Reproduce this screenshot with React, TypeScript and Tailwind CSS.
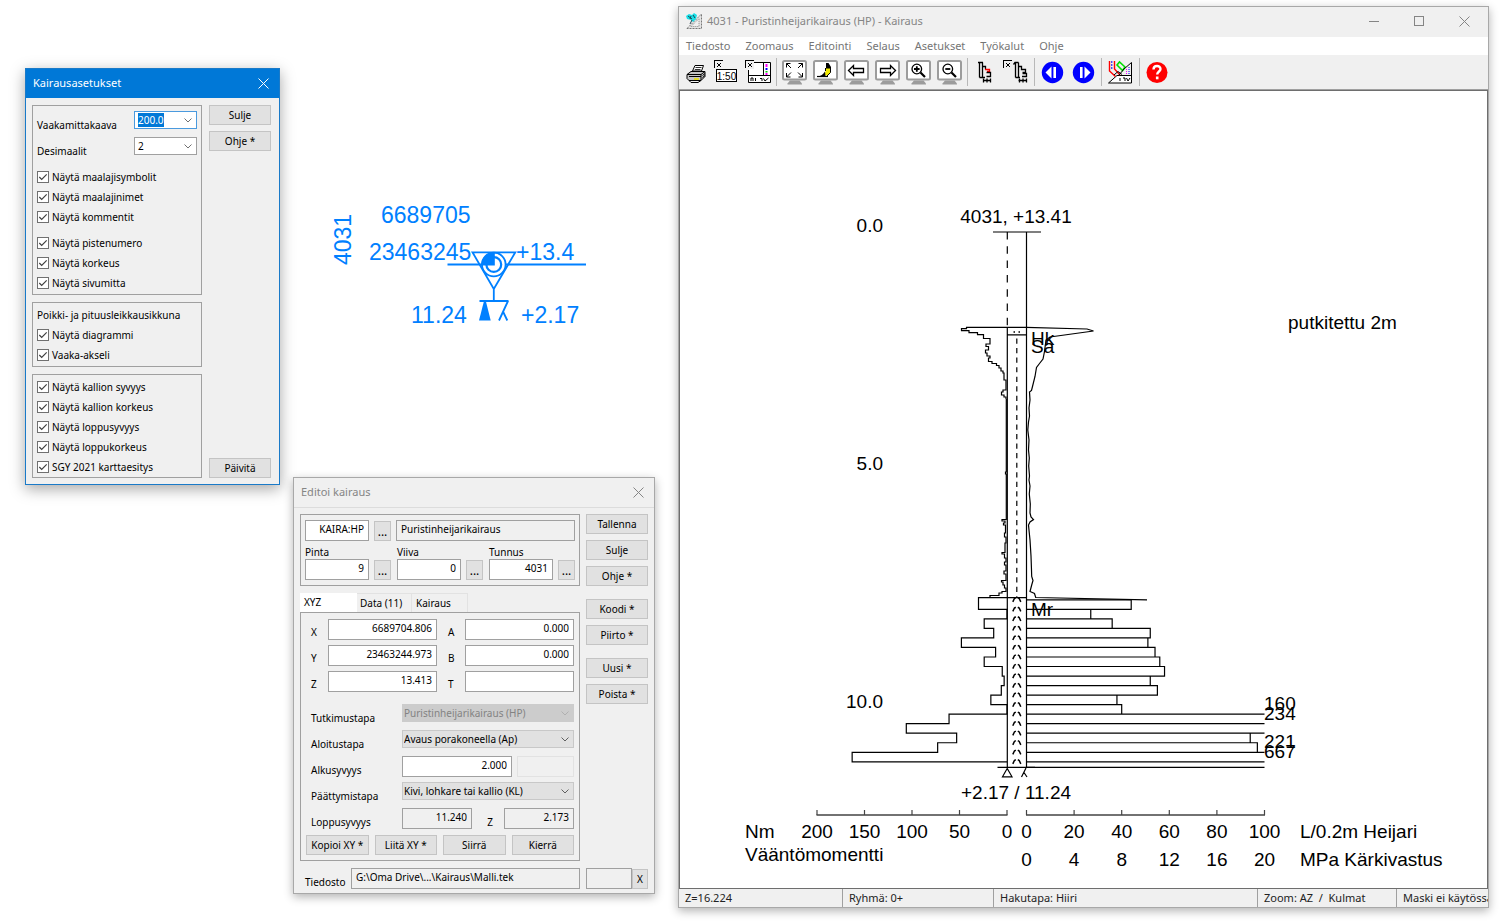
import React, { useEffect, useRef } from 'react';
import { clsx } from 'clsx';

/* ---------- shared controls ---------- */

const UI_FONT =
    "font-['Noto_Sans','Open_Sans',sans-serif] text-[10px] text-black";

function CloseIcon() {
    return (
        <svg width="11" height="11" viewBox="0 0 11 11" aria-hidden="true">
            <path
                d="M.5 .5l10 10M10.5 .5l-10 10"
                stroke="currentColor"
                fill="none"
            />
        </svg>
    );
}

function PushButton({
    children,
    className,
}: {
    children: React.ReactNode;
    className?: string;
}) {
    return (
        <button
            type="button"
            className={clsx(
                'flex h-5 items-center justify-center border border-[#c4c4c4] bg-[#e1e1e1] leading-4 whitespace-nowrap',
                className,
            )}
        >
            {children}
        </button>
    );
}

function Chevron({ className }: { className?: string }) {
    return (
        <svg
            width="8"
            height="5"
            viewBox="0 0 8 5"
            aria-hidden="true"
            className={clsx(
                'pointer-events-none mr-[5px] self-center justify-self-end [grid-area:1/1]',
                className,
            )}
        >
            <path d="M.5 .5L4 4L7.5 .5" stroke="currentColor" fill="none" />
        </svg>
    );
}

function CheckRow({ label }: { label: string }) {
    return (
        <label className="flex h-5 items-center gap-[3px] leading-4">
            <span className="grid">
                <input
                    type="checkbox"
                    defaultChecked
                    className="peer size-3 appearance-none border border-[#707070] bg-white [grid-area:1/1]"
                />
                <svg
                    viewBox="0 0 12 12"
                    aria-hidden="true"
                    className="pointer-events-none invisible size-3 [grid-area:1/1] peer-checked:visible"
                >
                    <path
                        d="M2.3 6l2.4 2.4l5-5"
                        stroke="#404040"
                        strokeWidth="1.2"
                        fill="none"
                    />
                </svg>
            </span>
            {label}
        </label>
    );
}

function Field({
    label,
    id,
    value,
    className,
    readOnly,
}: {
    label: string;
    id?: string;
    value: string;
    className?: string;
    readOnly?: boolean;
}) {
    return (
        <input
            id={id}
            aria-label={label}
            defaultValue={value}
            readOnly={readOnly}
            className={clsx(
                'h-[21px] min-w-0 border border-[#a0a0a0] px-1 pb-1 leading-4 outline-none',
                readOnly ? 'bg-[#f0f0f0]' : 'bg-white',
                className,
            )}
        />
    );
}

function Dropdown({
    id,
    label,
    value,
    disabled,
}: {
    id: string;
    label: string;
    value: string;
    disabled?: boolean;
}) {
    return (
        <div className="flex h-[26px] items-start">
            <label
                htmlFor={id}
                className="w-24 shrink-0 pl-[5px] leading-[28px]"
            >
                {label}
            </label>
            <span className="grid min-w-0 flex-1">
                <select
                    id={id}
                    disabled={disabled}
                    className={clsx(
                        'h-[18px] w-full appearance-none border px-px leading-4 outline-none [grid-area:1/1]',
                        disabled
                            ? 'border-[#cccccc] bg-[#cccccc] text-[#838383] opacity-100'
                            : 'border-[#c8c8c8] bg-[#e1e1e1]',
                    )}
                >
                    <option>{value}</option>
                </select>
                <Chevron
                    className={disabled ? 'text-[#b0b0b0]' : 'text-[#606060]'}
                />
            </span>
        </div>
    );
}

/* ---------- Kairausasetukset ---------- */

function SettingsWindow() {
    const scaleRef = useRef<HTMLInputElement>(null);

    useEffect(() => {
        scaleRef.current?.focus();
        scaleRef.current?.select();
    }, []);

    return (
        <section
            className={clsx(
                'absolute top-[68px] left-[25px] w-[255px] border border-[#1a7ac8] bg-[#f0f0f0] shadow-[0_4px_14px_rgba(0,0,0,0.35)]',
                UI_FONT,
            )}
        >
            <header className="flex h-[29px] items-center justify-between bg-[#0078d7] pr-[10px] pl-[7px] text-[11px] text-white">
                <h2>Kairausasetukset</h2>
                <button type="button" aria-label="Sulje ikkuna">
                    <CloseIcon />
                </button>
            </header>
            <div className="flex gap-[7px] pt-[7px] pr-2 pb-[6px] pl-[6px]">
                <div className="flex flex-1 flex-col gap-[7px]">
                    <div className="border border-[#a0a0a0] px-1 pt-[5px] pb-px">
                        <div className="flex h-[26px] items-start justify-between">
                            <label htmlFor="scale" className="leading-[28px]">
                                Vaakamittakaava
                            </label>
                            <span className="grid w-[63px]">
                                <input
                                    id="scale"
                                    ref={scaleRef}
                                    defaultValue="200.0"
                                    className="h-[18px] w-full border border-[#4a9ade] bg-white px-[3px] leading-4 outline-none [grid-area:1/1] selection:bg-[#0078d7] selection:text-white"
                                />
                                <Chevron className="text-[#707070]" />
                            </span>
                        </div>
                        <div className="flex h-[26px] items-start justify-between">
                            <label
                                htmlFor="decimals"
                                className="leading-[28px]"
                            >
                                Desimaalit
                            </label>
                            <span className="grid w-[63px]">
                                <select
                                    id="decimals"
                                    className="h-[18px] w-full appearance-none border border-[#a0a0a0] bg-white px-[3px] leading-4 [grid-area:1/1]"
                                >
                                    <option>2</option>
                                </select>
                                <Chevron className="text-[#707070]" />
                            </span>
                        </div>
                        <div className="mt-1">
                            <CheckRow label="Näytä maalajisymbolit" />
                            <CheckRow label="Näytä maalajinimet" />
                            <CheckRow label="Näytä kommentit" />
                        </div>
                        <div className="mt-[6px]">
                            <CheckRow label="Näytä pistenumero" />
                            <CheckRow label="Näytä korkeus" />
                            <CheckRow label="Näytä sivumitta" />
                        </div>
                    </div>
                    <div className="border border-[#a0a0a0] px-1 pt-[2px] pb-px">
                        <p className="leading-5">
                            Poikki- ja pituusleikkausikkuna
                        </p>
                        <CheckRow label="Näytä diagrammi" />
                        <CheckRow label="Vaaka-akseli" />
                    </div>
                    <div className="border border-[#a0a0a0] px-1 pt-[2px]">
                        <CheckRow label="Näytä kallion syvyys" />
                        <CheckRow label="Näytä kallion korkeus" />
                        <CheckRow label="Näytä loppusyvyys" />
                        <CheckRow label="Näytä loppukorkeus" />
                        <CheckRow label="SGY 2021 karttaesitys" />
                    </div>
                </div>
                <div className="flex w-[62px] flex-col gap-[6px]">
                    <PushButton>Sulje</PushButton>
                    <PushButton>Ohje *</PushButton>
                    <PushButton className="mt-auto">Päivitä</PushButton>
                </div>
            </div>
        </section>
    );
}

/* ---------- map symbol ---------- */

function MapSymbol() {
    return (
        <svg
            viewBox="330 200 260 130"
            className="absolute top-[200px] left-[330px] w-[260px] font-['Liberation_Sans',Arial,sans-serif] text-[23px]"
            fill="#0080ff"
            stroke="none"
        >
            <text x="381" y="223">
                6689705
            </text>
            <text x="369" y="260">
                23463245
            </text>
            <text x="516" y="260">
                +13.4
            </text>
            <text x="411" y="323">
                11.24
            </text>
            <text x="521" y="323">
                +2.17
            </text>
            <text transform="translate(351 265) rotate(-90)">4031</text>
            <g fill="none" stroke="#0080ff" strokeWidth="1.8">
                <path d="M472.5 252.3H515.3L493.8 289ZM493.8 289V301M479.5 301H508.5" />
                <path d="M447.5 264.5H482M505.5 264.5H586" />
                <circle cx="493.8" cy="264.5" r="11.8" />
                <circle cx="493.8" cy="264.5" r="7.4" strokeWidth="2.2" />
                <path d="M508 301L499 320.5M503 311.5L507.3 320.5" />
            </g>
            <path d="M494.8 265.5V252.5A12.5 12.5 0 0 0 481.3 265.5Z" />
            <path d="M484 301H485.8L490.7 320.5H479Z" />
        </svg>
    );
}

/* ---------- Editoi kairaus ---------- */

function MoreButton({ label }: { label: string }) {
    return (
        <button
            type="button"
            aria-label={label}
            className="mt-px h-5 w-[17px] shrink-0 border border-[#c4c4c4] bg-[#e1e1e1] text-[12px] leading-5"
        >
            ...
        </button>
    );
}

const POINT_FIELDS = [
    { label: 'Pinta', value: '9' },
    { label: 'Viiva', value: '0' },
    { label: 'Tunnus', value: '4031' },
];

const COORD_ROWS = [
    ['X', '6689704.806', 'A', '0.000'],
    ['Y', '23463244.973', 'B', '0.000'],
    ['Z', '13.413', 'T', ''],
];

function EditWindow() {
    return (
        <section
            className={clsx(
                'absolute top-[477px] left-[293px] w-[362px] border border-[#a8a8a8] bg-[#f0f0f0] shadow-[0_3px_9px_rgba(0,0,0,0.3)]',
                UI_FONT,
            )}
        >
            <header className="flex h-[30px] items-center justify-between border-b border-[#dcdcdc] pr-[10px] pl-[7px] text-[11px] text-[#858585]">
                <h2>Editoi kairaus</h2>
                <button type="button" aria-label="Sulje ikkuna">
                    <CloseIcon />
                </button>
            </header>
            <div className="flex gap-[6px] px-[6px] pt-[6px]">
                <div className="min-w-0 flex-1">
                    <div className="border border-[#a0a0a0] px-1 pt-[5px] pb-[5px]">
                        <div className="flex gap-[5px]">
                            <Field
                                label="Koodi"
                                value="KAIRA:HP"
                                className="w-16 text-right"
                            />
                            <MoreButton label="Valitse koodi" />
                            <Field
                                label="Koodin nimi"
                                value="Puristinheijarikairaus"
                                readOnly
                                className="flex-1"
                            />
                        </div>
                        <div className="mt-1 flex justify-between">
                            {POINT_FIELDS.map((field) => (
                                <div key={field.label}>
                                    <label
                                        htmlFor={field.label}
                                        className="block leading-[14px]"
                                    >
                                        {field.label}
                                    </label>
                                    <div className="flex gap-[5px]">
                                        <Field
                                            id={field.label}
                                            label={field.label}
                                            value={field.value}
                                            className="w-16 text-right"
                                        />
                                        <MoreButton
                                            label={`Valitse ${field.label}`}
                                        />
                                    </div>
                                </div>
                            ))}
                        </div>
                    </div>

                    <div role="tablist" className="mt-[7px] flex h-[19px]">
                        <button
                            type="button"
                            role="tab"
                            aria-selected="true"
                            className="w-[57px] bg-white pl-1 text-left leading-[17px]"
                        >
                            XYZ
                        </button>
                        <button
                            type="button"
                            role="tab"
                            aria-selected="false"
                            className="w-[55px] border-t border-r border-[#e2e2e2] pl-[3px] text-left leading-[18px]"
                        >
                            Data (11)
                        </button>
                        <button
                            type="button"
                            role="tab"
                            aria-selected="false"
                            className="w-14 border-t border-r border-[#e2e2e2] pl-1 text-left leading-[18px]"
                        >
                            Kairaus
                        </button>
                    </div>
                    <div className="border border-[#a0a0a0] px-[5px] pt-[6px] pb-[5px]">
                        {COORD_ROWS.map(([a, aValue, b, bValue]) => (
                            <div key={a} className="flex h-[26px] items-start">
                                <label
                                    htmlFor={a}
                                    className="w-[22px] shrink-0 pl-[5px] leading-[26px]"
                                >
                                    {a}
                                </label>
                                <Field
                                    id={a}
                                    label={a}
                                    value={aValue}
                                    className="flex-1 text-right"
                                />
                                <label
                                    htmlFor={b}
                                    className="w-7 shrink-0 pl-[11px] leading-[26px]"
                                >
                                    {b}
                                </label>
                                <Field
                                    id={b}
                                    label={b}
                                    value={bValue}
                                    className="flex-1 text-right"
                                />
                            </div>
                        ))}
                        <div className="mt-[7px]">
                            <Dropdown
                                id="tutkimustapa"
                                label="Tutkimustapa"
                                value="Puristinheijarikairaus (HP)"
                                disabled
                            />
                            <Dropdown
                                id="aloitustapa"
                                label="Aloitustapa"
                                value="Avaus porakoneella (Ap)"
                            />
                            <div className="flex h-[26px] items-start">
                                <label
                                    htmlFor="alkusyvyys"
                                    className="w-24 shrink-0 pl-[5px] leading-[28px]"
                                >
                                    Alkusyvyys
                                </label>
                                <Field
                                    id="alkusyvyys"
                                    label="Alkusyvyys"
                                    value="2.000"
                                    className="w-[110px] text-right"
                                />
                                <input
                                    aria-label="Alkusyvyyden lisätieto"
                                    disabled
                                    className="ml-[5px] h-[21px] min-w-0 flex-1 border border-[#e2e2e2]"
                                />
                            </div>
                            <Dropdown
                                id="paattymistapa"
                                label="Päättymistapa"
                                value="Kivi, lohkare tai kallio (KL)"
                            />
                            <div className="flex h-[26px] items-start">
                                <label
                                    htmlFor="loppusyvyys"
                                    className="w-24 shrink-0 pl-[5px] leading-[28px]"
                                >
                                    Loppusyvyys
                                </label>
                                <Field
                                    id="loppusyvyys"
                                    label="Loppusyvyys"
                                    value="11.240"
                                    readOnly
                                    className="w-[70px] text-right"
                                />
                                <label
                                    htmlFor="loppu-z"
                                    className="flex-1 pl-1 text-center leading-[28px]"
                                >
                                    Z
                                </label>
                                <Field
                                    id="loppu-z"
                                    label="Z"
                                    value="2.173"
                                    readOnly
                                    className="w-[70px] text-right"
                                />
                            </div>
                        </div>
                        <div className="mt-px grid grid-cols-4 gap-[6px]">
                            <PushButton>Kopioi XY *</PushButton>
                            <PushButton>Liitä XY *</PushButton>
                            <PushButton>Siirrä</PushButton>
                            <PushButton>Kierrä</PushButton>
                        </div>
                    </div>
                </div>
                <div className="flex w-[62px] shrink-0 flex-col gap-[6px]">
                    <PushButton>Tallenna</PushButton>
                    <PushButton>Sulje</PushButton>
                    <PushButton>Ohje *</PushButton>
                    <PushButton className="mt-[7px]">Koodi *</PushButton>
                    <PushButton>Piirto *</PushButton>
                    <PushButton className="mt-[7px]">Uusi *</PushButton>
                    <PushButton>Poista *</PushButton>
                </div>
            </div>
            <div className="mt-[7px] mb-1 flex h-[21px] items-start px-[6px]">
                <label
                    htmlFor="file"
                    className="w-[51px] shrink-0 pl-[5px] leading-[28px]"
                >
                    Tiedosto
                </label>
                <Field
                    id="file"
                    label="Tiedosto"
                    value="G:\Oma Drive\...\Kairaus\Malli.tek"
                    readOnly
                    className="flex-1"
                />
                <Field
                    label="Suodatin"
                    value=""
                    readOnly
                    className="ml-[6px] w-[46px]"
                />
                <PushButton className="mt-px w-4">X</PushButton>
            </div>
        </section>
    );
}

/* ---------- toolbar icons, 30 x 28 each ---------- */

function Icon({ children }: { children: React.ReactNode }) {
    return (
        <svg
            width="30"
            height="28"
            viewBox="0 0 30 28"
            fill="none"
            stroke="#000"
            aria-hidden="true"
            className="mx-auto"
        >
            {children}
        </svg>
    );
}

function Monitor({ children }: { children: React.ReactNode }) {
    return (
        <Icon>
            <rect
                x="4"
                y="3"
                width="23"
                height="18.5"
                rx="1.5"
                fill="#fff"
                stroke="#9c9c9c"
                strokeWidth="2"
            />
            <path d="M11 22.5H20.5L23 25.5V26.5H8.5V25.5Z" fill="#9c9c9c" stroke="none" />
            {children}
        </Icon>
    );
}

function CornerMark() {
    return (
        <>
            <path d="M2 2.5H11M2.5 2V10" />
            <path d="M5 5l4 4M9 5l-4 4" />
        </>
    );
}

function PrinterIcon() {
    return (
        <Icon>
            <path d="M11.5 13L14 7.5H22.5L20.5 13Z" fill="#fff" />
            <path d="M14.5 9.5H20.5M13.8 11.5H19.5" stroke="#333" />
            <path d="M6 16.5L10 13.5H24V18.5L20 22.5H8L6 20.5Z" fill="#c4c4c4" />
            <path d="M6 16.5H20L24 13.5M20 16.5V22.5M21.5 17.5L24 15.5M21.5 19.5L24 17.5" />
            <path d="M8 18.5H20M8 22.5L10 24.5H17L20 22.5" />
            <path d="M13 21H18" stroke="#e8e000" strokeWidth="1.6" />
        </Icon>
    );
}

function ScaleIcon() {
    return (
        <Icon>
            <CornerMark />
            <rect x="4.5" y="11.5" width="20" height="12" fill="#fff" />
            <text
                x="14.5"
                y="21.5"
                textAnchor="middle"
                fill="#000"
                stroke="none"
                className="font-['Liberation_Sans',Arial,sans-serif] text-[10px]"
            >
                1:50
            </text>
        </Icon>
    );
}

function SheetIcon() {
    return (
        <Icon>
            <path d="M5.5 4.5H27V24H5.5Z" fill="#fff" stroke="none" />
            <path d="M1 1H11V11H1Z" fill="#f0f0f0" stroke="none" />
            <path d="M11 4.5H27.5V24.5H5.5V12M20.5 5V18M5.5 17.5H27" />
            <path d="M23.5 6V9" stroke="#f0f" strokeWidth="2" />
            <path d="M23.5 10V12" stroke="#00f" strokeWidth="2" />
            <path d="M23.5 13V14.5" stroke="#0c0" strokeWidth="2" />
            <path d="M23.5 15V17" stroke="#f0f" strokeWidth="2" />
            <path d="M8 23V20H10V23M12.5 20V23M17 20.5H19V23M20.5 20.5L22 23L25.5 20" />
            <CornerMark />
        </Icon>
    );
}

function FitIcon() {
    return (
        <Monitor>
            <path d="M7.5 9.5V5.5H11.5M7.5 5.5L12 10M19.5 5.5H23.5V9.5M23.5 5.5L19 10M7.5 15V19H11.5M7.5 19L12 14.5M19.5 19H23.5V15M23.5 19L19 14.5" />
        </Monitor>
    );
}

function BrushIcon() {
    return (
        <Monitor>
            <path d="M15.5 10H20.5V14.5L17.5 17.5H13.5L15.5 14Z" fill="#f0e800" stroke="none" />
            <path d="M16 5H18.5L21 9V10.5H16Z" fill="#000" stroke="none" />
            <path d="M20.5 10V14.5L17 18M15.5 10V13" />
            <path d="M7.5 18.5C11 18 13 16.5 15 13.5L15.5 18.5Z" fill="#000" stroke="none" />
            <path d="M7 18.5H18" strokeWidth="1.2" />
        </Monitor>
    );
}

function ArrowLeftIcon() {
    return (
        <Monitor>
            <path d="M7.5 12.5L12.5 7.5V10.5H22.5V14.5H12.5V17.5Z" strokeWidth="1.3" />
        </Monitor>
    );
}

function ArrowRightIcon() {
    return (
        <Monitor>
            <path d="M23.5 12.5L18.5 7.5V10.5H8.5V14.5H18.5V17.5Z" strokeWidth="1.3" />
        </Monitor>
    );
}

function ZoomIcon({ plus }: { plus?: boolean }) {
    return (
        <Monitor>
            <circle cx="13.8" cy="11" r="4.8" strokeWidth="1.3" />
            <path d="M17.5 14.5L22 19" strokeWidth="2.2" />
            <path
                d={plus ? 'M11 11H16.6M13.8 8.2V13.8' : 'M11.3 11H16.3'}
                strokeWidth="1.8"
            />
        </Monitor>
    );
}

function ProfileIcon() {
    return (
        <Icon>
            <path d="M8 4.5H13M9.5 4.5V19.5M12.5 4.5V19.5M9.5 19.5H15" strokeWidth="1.3" />
            <path d="M13 8.5H15.5V11.5" strokeWidth="1.3" />
            <path d="M15 11.5H19.5V13.5H17" stroke="#f00" strokeWidth="1.3" />
            <path d="M16.5 14.5H20.5V18.5H16.5" strokeWidth="1.3" />
            <path d="M13 22.5H21M13.5 20.5V24.5M17 20.5V24.5M20.5 20.5V24.5" strokeWidth="1.3" />
        </Icon>
    );
}

function ProfileCornerIcon() {
    return (
        <Icon>
            <CornerMark />
            <path d="M12.5 6.5L14 4.5H17.5M14.5 5V19.5M17.5 4.5V19.5M14.5 19.5H19" strokeWidth="1.3" />
            <path d="M17.5 8.5H20.5V11.5H24.5V14.5H21.5M21.5 15.5H25.5V18.5H21" strokeWidth="1.3" />
            <path d="M17.5 22.5H26M18.5 20.5V24.5M22 20.5V24.5M25.5 20.5V24.5" strokeWidth="1.3" />
        </Icon>
    );
}

function PreviousIcon() {
    return (
        <Icon>
            <circle cx="15.5" cy="14.5" r="10.7" fill="#0000ff" stroke="none" />
            <path d="M8.5 14.5L14.5 8.5V20.5Z" fill="#fff" stroke="none" />
            <path d="M17.7 9V20" stroke="#fff" strokeWidth="2.6" />
        </Icon>
    );
}

function NextIcon() {
    return (
        <Icon>
            <circle cx="15.5" cy="14.5" r="10.7" fill="#0000ff" stroke="none" />
            <path d="M22.5 14.5L16.5 8.5V20.5Z" fill="#fff" stroke="none" />
            <path d="M13.3 9V20" stroke="#fff" strokeWidth="2.6" />
        </Icon>
    );
}

function LayersIcon() {
    return (
        <Icon>
            <path d="M3.5 25L12 17.5H26.5V25Z" fill="#fff" />
            <path d="M4.5 3V13L10.5 18.5" stroke="#f00" strokeWidth="1.4" />
            <path d="M6.8 3V12" stroke="#00f" strokeDasharray="2 1" />
            <path d="M9.5 3V11L15 17" stroke="#f00" strokeWidth="1.4" />
            <path d="M12 7L14.5 4L20 9L17.5 12.5Z" stroke="#00e000" strokeWidth="1.6" />
            <path d="M14 17L19 11L26.5 4.5V25" />
            <path d="M24 9V17" stroke="#00f" strokeDasharray="1 1" />
            <path d="M21.5 11V17" stroke="#f0f" strokeDasharray="1 1" />
            <path d="M9 17L13 13.5L17 16.5M15 20V23M18 20H20V23M21.5 20L23 23L25 20" />
        </Icon>
    );
}

function HelpIcon() {
    return (
        <Icon>
            <circle cx="15" cy="14.5" r="10.5" fill="#f00" stroke="none" />
            <path
                d="M11.5 11.5C11.5 7 18.5 7 18.5 11C18.5 13.5 15.2 13.5 15.2 16.5"
                stroke="#fff"
                strokeWidth="2.4"
            />
            <path d="M15.2 18.5V21.3" stroke="#fff" strokeWidth="2.6" />
        </Icon>
    );
}

const TOOL_GROUPS = [
    [
        { name: 'Tulosta', icon: <PrinterIcon /> },
        { name: 'Mittakaava', icon: <ScaleIcon /> },
        { name: 'Arkki', icon: <SheetIcon /> },
    ],
    [
        { name: 'Sovita', icon: <FitIcon /> },
        { name: 'Piirrä uudelleen', icon: <BrushIcon /> },
        { name: 'Edellinen näkymä', icon: <ArrowLeftIcon /> },
        { name: 'Seuraava näkymä', icon: <ArrowRightIcon /> },
        { name: 'Lähennä', icon: <ZoomIcon plus /> },
        { name: 'Loitonna', icon: <ZoomIcon /> },
    ],
    [
        { name: 'Profiili', icon: <ProfileIcon /> },
        { name: 'Profiilin asetukset', icon: <ProfileCornerIcon /> },
    ],
    [
        { name: 'Edellinen kairaus', icon: <PreviousIcon /> },
        { name: 'Seuraava kairaus', icon: <NextIcon /> },
    ],
    [{ name: 'Tasot', icon: <LayersIcon /> }],
    [{ name: 'Ohje', icon: <HelpIcon /> }],
];

/* ---------- sounding diagram ---------- */

const SURFACE_Y = 232;
const PX_PER_METRE = 47.64;
const TORQUE_X = 1007;
const BLOWS_X = 1026.5;
const BARS_Y = 599.8;
const BAR_STEP = 9.53;
const END_Y = 767.4;

// one value per 0.2 m
const TORQUE = [
    30, 0, 24, 14, 48, 12, 24, 5, 3, 6, 17, 0, 61, 106, 53, 73, 163,
];
const BLOWS = [
    44, 27, 36, 52, 51, 54, 56, 58, 52, 55, 38, 40, 160, 234, 94, 97, 221, 667,
];

const barY = (row: number) => Math.min(BARS_Y + row * BAR_STEP, END_Y);

const torquePath =
    'M1007 597.6' +
    TORQUE.map((value, i) => {
        const x = TORQUE_X - value * 0.95;
        return `H${x}V${barY(i + 1)}`;
    }).join('') +
    `H${TORQUE_X}`;

const blowsPath = BLOWS.map((value, i) => {
    const x = BLOWS_X + Math.min(value, 100) * 2.38;
    const edge = value > 100 ? `M${x} ${barY(i + 1)}` : `V${barY(i + 1)}`;
    return `M${BLOWS_X} ${barY(i)}H${x}${edge}H${BLOWS_X}`;
}).join('');

const LEFT_CURVE =
    'M1026 327.4H966.5V328.7H961.5V330.7H969V332.7H977.5V334.7H983.5V338.5H990V344H986V346.5H988.5V350H985.5V353H987V356H990V358H988.5V361.5H992V363.5H996.5V365.5H999V368H1001V371H1003V373H1004V380H1006V390H1003V392H1001.5V395H1004V397H1006V399' +
    'M1006.3 399V472H1005.5V474H1006.3V519.5H1002V521H1005V523H1003.5V525H1005.5V533H1004.5V537H1006V543H1005V552.5H1002V554H1004.5V558H1006V562H1004.5V565H1006V571H1004V574H1006V580.5H1001.5V582H1003V585H1004.5V588H1006V591.5H1002V593H999V595.5H990V597.5H978';

const RIGHT_CURVE =
    'M1026 327.4L1087 329L1093.5 331L1050 337L1046 340L1044.5 351.5L1043 359L1039.5 363.5L1036.5 367.5L1035 376.5L1032.5 386.5L1031.5 390.5L1029.5 392L1030 400L1029 408L1029.5 416L1028.5 422L1027.8 430L1029 440L1028.5 450L1029.3 458L1028.7 466L1029.5 476L1029 480L1030 486L1029.3 494L1030.3 504L1030 513L1031 517L1033.5 519.6L1030 522L1028.5 525L1030 540L1031 556L1031.5 570L1031.7 576.5L1033 580.5L1031.7 585L1030 591.5L1034.5 593.5L1035.7 597.5L1147 599.8';

const TORQUE_TICKS = [200, 150, 100, 50, 0];
const BLOW_TICKS = [0, 20, 40, 60, 80, 100];

function Diagram() {
    return (
        <svg
            viewBox="680 91 807 797"
            preserveAspectRatio="xMinYMin meet"
            className="absolute inset-0 h-full w-full font-['Liberation_Sans',Arial,sans-serif] text-[19px]"
        >
            <g fill="none" stroke="#000" strokeWidth="1.2">
                <path d="M993 232H1041M1026.5 232V767.4M1007.3 327V767.4M1007 334.8H1026.5M1007 597.6H1026.5" />
                <path d="M1007.3 232V327" strokeDasharray="7.5 6.8" />
                <path d="M1016.8 338.5V597" strokeDasharray="5.2 4.35" />
                <path d="M1013.5 332H1015M1018.5 332H1020" strokeWidth="1.6" />
                <path d={LEFT_CURVE} />
                <path d={RIGHT_CURVE} />
                <path d={torquePath} />
                <path d={blowsPath} />
                {BLOWS.map((_, i) => (
                    <path
                        key={i}
                        transform={`translate(1016.8 ${597.5 + i * BAR_STEP})`}
                        d="M-4 4.4L-2.4 1L-1 .2M1 .2L2.4 1L4 4.4"
                        strokeWidth="1.5"
                    />
                ))}
                <path d="M997.5 767.4H1035" />
                <path d="M1007.2 768.5L1002.5 776.8H1012ZM1026 768L1021.5 777M1024 772.5L1027 777" />
            </g>
            <g stroke="#444" strokeWidth="1.2" fill="none">
                <path d="M816.5 815H1007.5M1026 815H1265" strokeWidth="1.6" />
                {TORQUE_TICKS.map((value) => (
                    <path key={value} d={`M${TORQUE_X - value * 0.95} 810V815`} />
                ))}
                {BLOW_TICKS.map((value) => (
                    <path key={value} d={`M${BLOWS_X + value * 2.38} 810V815`} />
                ))}
            </g>
            <g fill="#000">
                {[0, 5, 10].map((depth) => (
                    <text
                        key={depth}
                        x="883"
                        y={SURFACE_Y + depth * PX_PER_METRE}
                        textAnchor="end"
                    >
                        {depth.toFixed(1)}
                    </text>
                ))}
                <text x="1016" y="223" textAnchor="middle">
                    4031, +13.41
                </text>
                <text x="1016" y="799" textAnchor="middle">
                    +2.17 / 11.24
                </text>
                <text x="1031" y="345">
                    Hk
                </text>
                <text x="1031" y="353">
                    Sa
                </text>
                <text x="1031" y="616">
                    Mr
                </text>
                <text x="1288" y="329">
                    putkitettu 2m
                </text>
                {BLOWS.map(
                    (value, i) =>
                        value > 100 && (
                            <text key={i} x="1264" y={barY(i) - 4}>
                                {value}
                            </text>
                        ),
                )}
                <text x="745" y="838">
                    Nm
                </text>
                <text x="745" y="861">
                    Vääntömomentti
                </text>
                <text x="1300" y="838">
                    L/0.2m Heijari
                </text>
                <text x="1300" y="866">
                    MPa Kärkivastus
                </text>
                <g textAnchor="middle">
                    {TORQUE_TICKS.map((value) => (
                        <text
                            key={value}
                            x={TORQUE_X - value * 0.95}
                            y="838"
                        >
                            {value}
                        </text>
                    ))}
                    {BLOW_TICKS.map((value) => (
                        <React.Fragment key={value}>
                            <text x={BLOWS_X + value * 2.38} y="838">
                                {value}
                            </text>
                            <text x={BLOWS_X + value * 2.38} y="866">
                                {value / 5}
                            </text>
                        </React.Fragment>
                    ))}
                </g>
            </g>
        </svg>
    );
}

/* ---------- Kairaus window ---------- */

const MENUS = [
    'Tiedosto',
    'Zoomaus',
    'Editointi',
    'Selaus',
    'Asetukset',
    'Työkalut',
    'Ohje',
];

function AppIcon() {
    return (
        <svg width="16" height="16" viewBox="0 0 16 16" aria-hidden="true">
            <path d="M1 15.5L15.5 1V15.5Z" fill="#e4e4e4" stroke="#777" strokeDasharray="2 1" />
            <path d="M5 13.5L13 5.5V13.5Z" fill="#f0f0f0" stroke="#888" strokeDasharray="1 1" />
            <path d="M0 3L3 1L6 2L8 0L11 2L10 6L7 9L5 7L1 6Z" fill="#19dfe6" />
            <path d="M2 3L6 6M5 3L4 6M7 2L9 5M6 7L4 11" stroke="#245" fill="none" />
        </svg>
    );
}

function SoundingWindow() {
    return (
        <section className="absolute top-[6px] right-[11px] bottom-[13px] left-[678px] flex flex-col border border-[#a8a8a8] bg-[#f0f0f0] font-['Noto_Sans','Open_Sans',sans-serif] text-[11px] shadow-[0_3px_9px_rgba(0,0,0,0.3)]">
            <header className="flex h-[30px] shrink-0 items-center pr-[18px] pb-[2px] pl-[7px] text-[#858585]">
                <AppIcon />
                <h1 className="ml-[5px] flex-1">
                    4031 - Puristinheijarikairaus (HP) - Kairaus
                </h1>
                <div className="flex items-center gap-[35px]">
                    <button type="button" aria-label="Pienennä">
                        <svg width="10" height="11" aria-hidden="true">
                            <path d="M0 5.5H10" stroke="currentColor" />
                        </svg>
                    </button>
                    <button type="button" aria-label="Suurenna">
                        <svg width="10" height="10" aria-hidden="true">
                            <rect
                                x=".5"
                                y=".5"
                                width="9"
                                height="9"
                                fill="none"
                                stroke="currentColor"
                            />
                        </svg>
                    </button>
                    <button type="button" aria-label="Sulje ikkuna">
                        <CloseIcon />
                    </button>
                </div>
            </header>
            <nav className="flex h-[18px] shrink-0 items-center gap-[15px] bg-white pl-[7px] leading-[18px] text-[#757575]">
                {MENUS.map((menu) => (
                    <button key={menu} type="button">
                        {menu}
                    </button>
                ))}
            </nav>
            <div className="flex h-[35px] shrink-0 items-center border-b border-[#a0a0a0] pl-px">
                {TOOL_GROUPS.map((group, i) => (
                    <React.Fragment key={i}>
                        {i > 0 && (
                            <span className="mr-px ml-[3px] h-7 w-px bg-[#b8b8b8]" />
                        )}
                        {group.map((tool) => (
                            <button
                                key={tool.name}
                                type="button"
                                aria-label={tool.name}
                                className={
                                    tool.name === 'Tasot'
                                        ? 'w-[33px]'
                                        : 'w-[31px]'
                                }
                            >
                                {tool.icon}
                            </button>
                        ))}
                    </React.Fragment>
                ))}
            </div>
            <div className="relative min-h-0 flex-1 border border-[#6e6e6e] bg-white">
                <Diagram />
            </div>
            <footer className="flex h-[18px] shrink-0 divide-x divide-[#a0a0a0] leading-[18px] whitespace-pre text-[#222] [&>span]:overflow-hidden [&>span]:pl-[6px]">
                <span className="w-[164px]">Z=16.224</span>
                <span className="w-[151px]">Ryhmä: 0+</span>
                <span className="flex-1">Hakutapa: Hiiri</span>
                <span className="w-[139px]">Zoom: AZ  /  Kulmat</span>
                <span className="w-[91px]">Maski ei käytössä</span>
            </footer>
        </section>
    );
}

export default function App() {
    return (
        <main className="relative h-screen w-full overflow-hidden bg-white">
            <MapSymbol />
            <SettingsWindow />
            <EditWindow />
            <SoundingWindow />
        </main>
    );
}
